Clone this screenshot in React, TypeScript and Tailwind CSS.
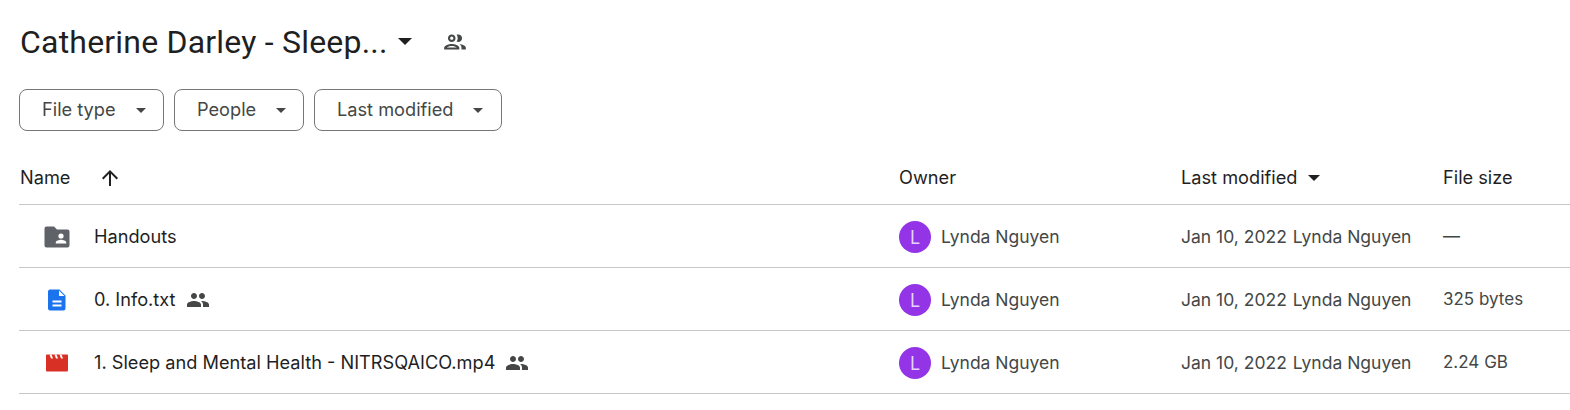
const Caret = ({ className }: { className: string }) => (
  <svg viewBox="0 0 10 5" className={className} fill="currentColor">
    <path d="M0 0l5 5 5-5z" />
  </svg>
);

const SharedIcon = () => (
  <svg viewBox="0 0 24 24" className="w-[24px] h-[24px] text-[#444746]" fill="currentColor">
    <path d="M16 11c1.66 0 2.99-1.34 2.99-3S17.66 5 16 5s-3 1.34-3 3 1.34 3 3 3zm-8 0c1.66 0 2.99-1.34 2.99-3S9.66 5 8 5 5 6.34 5 8s1.34 3 3 3zm0 2c-2.33 0-7 1.17-7 3.5V19h14v-2.5C15 14.17 10.33 13 8 13zm8 0c-.29 0-.62.02-.97.05C16.19 13.89 17 15.02 17 16.5V19h6v-2.5c0-2.33-4.67-3.5-7-3.5z" />
  </svg>
);

const SharedOutline = () => (
  <svg viewBox="0 0 24 24" className="w-[26px] h-[26px] text-[#444746]" fill="currentColor">
    <path d="M9 13.75c-2.34 0-7 1.17-7 3.5V19h14v-1.75c0-2.33-4.66-3.5-7-3.5zM4.34 17c.84-.58 2.87-1.25 4.66-1.25s3.82.67 4.66 1.25H4.34zM9 12c1.93 0 3.5-1.57 3.5-3.5S10.93 5 9 5 5.5 6.57 5.5 8.5 7.07 12 9 12zm0-5c.83 0 1.5.67 1.5 1.5S9.83 10 9 10s-1.5-.67-1.5-1.5S8.17 7 9 7zm7.04 6.81c1.16.84 1.96 1.96 1.96 3.44V19h4v-1.75c0-2.02-3.5-3.17-5.96-3.44zM15 12c1.93 0 3.5-1.57 3.5-3.5S16.93 5 15 5c-.54 0-1.04.13-1.5.35.63.89 1 1.98 1 3.15s-.37 2.26-1 3.15c.46.22.96.35 1.5.35z" />
  </svg>
);

const ArrowUpward = () => (
  <svg viewBox="0 0 24 24" className="w-[24px] h-[24px] text-[#1f1f1f]" fill="currentColor">
    <path d="M4 12l1.41 1.41L11 7.83V20h2V7.83l5.58 5.59L20 12l-8-8-8 8z" />
  </svg>
);

const FolderIcon = () => (
  <svg viewBox="0 0 26 22" className="w-[26px] h-[22px]">
    <path fill="#5f6368" d="M2.5 0.5h7.5l3 3h10.5a2 2 0 0 1 2 2v14a2 2 0 0 1-2 2h-21a2 2 0 0 1-2-2v-17a2 2 0 0 1 2-2z" />
    <circle cx="17" cy="10" r="2.6" fill="#fff" />
    <path fill="#fff" d="M11.8 17.5v-1.1c0-1.8 3.4-2.7 5.2-2.7s5.2.9 5.2 2.7v1.1z" />
  </svg>
);

const DocIcon = () => (
  <svg viewBox="0 0 18 22" className="w-[18px] h-[22px]">
    <path fill="#1b74ee" d="M2 0.5h9.5l6 6v13a2 2 0 0 1-2 2h-13.5a2 2 0 0 1-2-2v-17a2 2 0 0 1 2-2z" />
    <path fill="#fff" d="M11 1.5v5.5h5.5zM4.5 11.5h9v2h-9zM4.500 15.500h9v2h-9z" />
  </svg>
);

const VideoIcon = () => (
  <svg viewBox="0 0 22 18" className="w-[22px] h-[18px]">
    <path fill="#d93025" d="M1 0.5h20a1 1 0 0 1 1 1v15a1 1 0 0 1-1 1h-20a1 1 0 0 1-1-1v-15a1 1 0 0 1 1-1z" />
    <path fill="#fff" d="M3.5 0.5h2l1.5 4h-2zM8.5 0.5h2l1.500 4h-2zM13.500 0.500h2l1.500 4h-2z" />
  </svg>
);

const CHIPS = [
  { label: 'File type', width: 'w-[145px]' },
  { label: 'People', width: 'w-[130px]' },
  { label: 'Last modified', width: 'w-[188px]' },
];

const ROWS = [
  { name: 'Handouts', icon: <FolderIcon />, shared: false, size: '—' },
  { name: '0. Info.txt', icon: <DocIcon />, shared: true, size: '325 bytes' },
  { name: '1. Sleep and Mental Health - NITRSQAICO.mp4', icon: <VideoIcon />, shared: true, size: '2.24 GB' },
];

export default function App() {
  return (
    <div className="font-['Inter',sans-serif] w-[1570px] h-[410px] overflow-hidden bg-white pl-[19px] text-[#1f1f1f] text-[18.2px]">
      {/* Title */}
      <div className="flex items-center h-[41px] mt-[21px]">
        <h1 className="font-['Roboto',sans-serif] text-[32px] leading-[40px] font-normal tracking-[0.2px] pl-px">Catherine Darley - Sleep...</h1>
        <Caret className="w-[14px] h-[7px] ml-[10px] text-[#1f1f1f]" />
        <div className="ml-[30px]"><SharedOutline /></div>
      </div>

      {/* Filters */}
      <div className="flex gap-[10px] mt-[27px]">
        {CHIPS.map(c => (
          <button key={c.label} className={`${c.width} h-[42px] rounded-[8px] border border-[#747775] flex items-center gap-[20px] pl-[22px] text-[#444746]`}>
            <span>{c.label}</span>
            <Caret className="w-[10px] h-[5px] text-[#444746]" />
          </button>
        ))}
      </div>

      {/* Header */}
      <div className="flex items-center h-[74px] pt-[21px] border-b border-[#c7c7c7]">
        <div className="w-[880px] flex items-center pl-[1px]">
          <span>Name</span>
          <div className="ml-[28px]"><ArrowUpward /></div>
        </div>
        <div className="w-[282px]">Owner</div>
        <div className="w-[262px] flex items-center">
          <span>Last modified</span>
          <Caret className="w-[12px] h-[6px] ml-[11px] text-[#1f1f1f]" />
        </div>
        <div>File size</div>
      </div>

      {/* Rows */}
      {ROWS.map(r => (
        <div key={r.name} className="flex items-center h-[63px] pt-[2px] border-b border-[#c7c7c7]">
          <div className="w-[880px] flex items-center">
            <div className="w-[75px] pl-[25px] pr-[24px] flex justify-center items-center">{r.icon}</div>
            <span>{r.name}</span>
            {r.shared && <div className="ml-[10px]"><SharedIcon /></div>}
          </div>
          <div className="w-[282px] flex items-center text-[#444746] text-[17.5px]">
            <div className="w-[32px] h-[32px] rounded-full bg-[#9334e6] text-[#e6d3fa] flex items-center justify-center text-[18px]">L</div>
            <span className="ml-[10px]">Lynda Nguyen</span>
          </div>
          <div className="w-[262px] flex items-center text-[#444746] text-[17.5px]">
            <span>Jan 10, 2022</span>
            <span className="ml-[6px]">Lynda Nguyen</span>
          </div>
          <div className="text-[#444746] text-[17px]">{r.size}</div>
        </div>
      ))}
    </div>
  );
}
